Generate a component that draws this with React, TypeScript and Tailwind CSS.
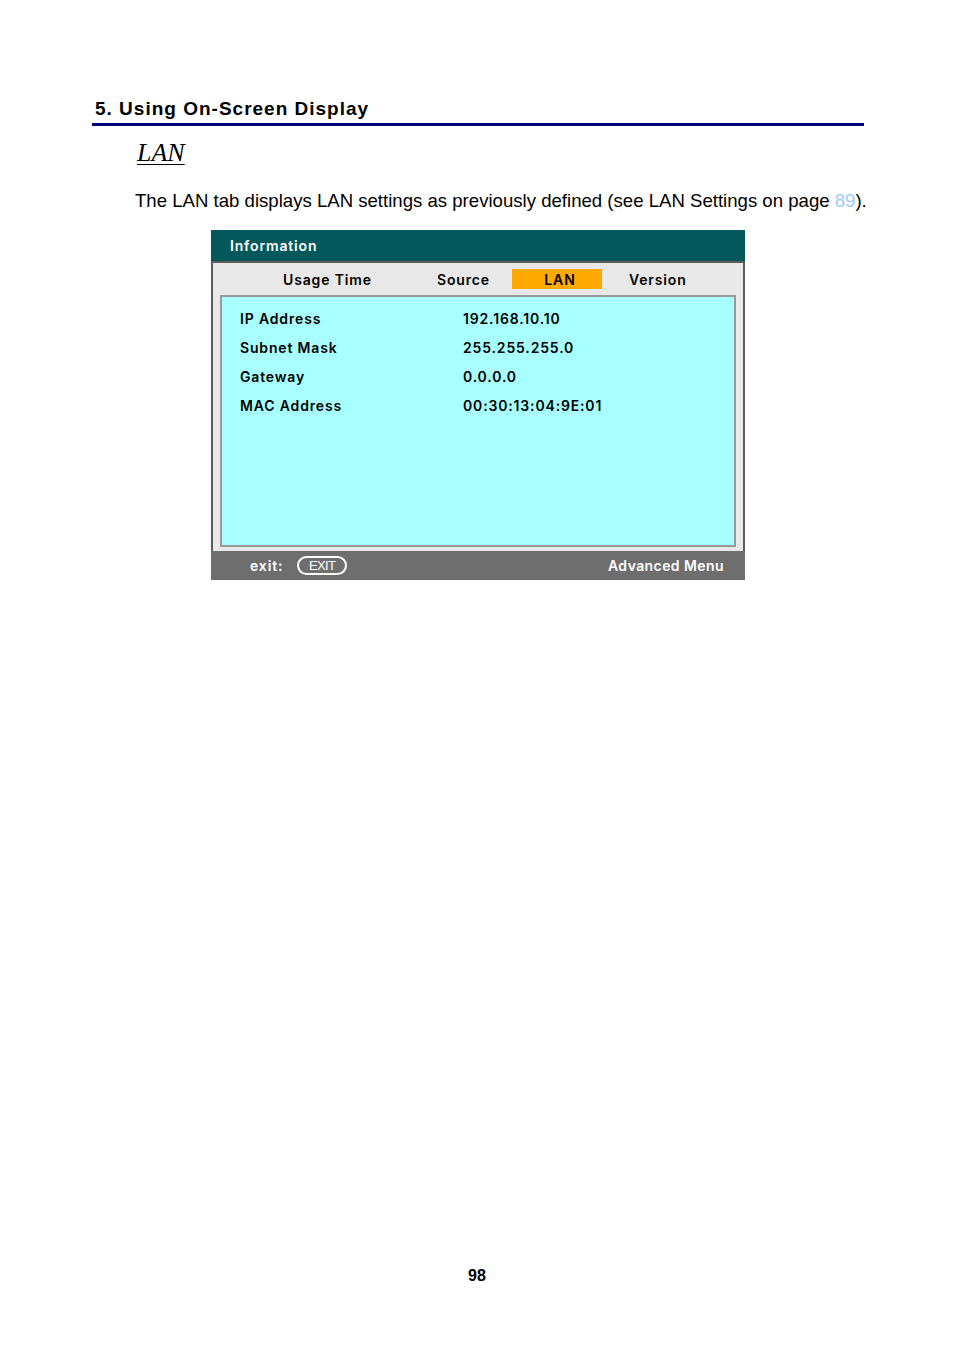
import React from 'react'

const osd = { fontFamily: 'Inter, "DejaVu Sans", sans-serif' }

const rows: [string, string][] = [
  ['IP Address', '192.168.10.10'],
  ['Subnet Mask', '255.255.255.0'],
  ['Gateway', '0.0.0.0'],
  ['MAC Address', '00:30:13:04:9E:01'],
]

function InfoPanel() {
  return (
    <div className="ml-[211px] w-[534px] text-[14px] font-semibold tracking-[0.06em] whitespace-nowrap" style={osd}>
      <div className="h-[31px] bg-[#02585a] text-white flex items-center pl-[19px]">Information</div>
      <div className="border-x-2 border-t-2 border-[#5c5c5c] bg-[#e8e8e8] pb-[4px]">
        <div className="h-[32px] flex items-center text-black">
          <div className="ml-[70px] w-[87px] text-center">Usage Time</div>
          <div className="ml-[67px] w-[51px] text-center">Source</div>
          <div className="ml-[24px] w-[90px] h-[20px] bg-[#ffaa00] flex items-center justify-center pl-[6px]">LAN</div>
          <div className="ml-[27px] w-[56px] text-center">Version</div>
        </div>
        <div className="mx-[7px] h-[252px] border-2 border-[#999999] bg-[#a8ffff] pt-[7px] pl-[18px] text-black">
          {rows.map(([label, value]) => (
            <div key={label} className="h-[29px] flex items-center">
              <span className="w-[223px]">{label}</span>
              <span>{value}</span>
            </div>
          ))}
        </div>
      </div>
      <div className="h-[29px] bg-[#6e6e6e] text-white flex items-center">
        <span className="ml-[39px]">exit:</span>
        <span className="ml-[14px] h-[19px] w-[50px] rounded-full border-2 border-white flex items-center justify-center text-[13px] font-normal tracking-tighter" style={{ fontFamily: '"Liberation Sans", sans-serif' }}>EXIT</span>
        <span className="ml-auto mr-[21px] tracking-[0.03em]">Advanced Menu</span>
      </div>
    </div>
  )
}

export default function App() {
  return (
    <div className="w-[954px] h-[1349px] bg-white flex flex-col" style={{ fontFamily: '"Liberation Sans", Arial, sans-serif' }}>
      <h2 className="mt-[97px] ml-[95px] text-[19px] font-bold tracking-[1px] leading-[24px] text-black">5. Using On-Screen Display</h2>
      <div className="mt-[2px] ml-[92px] w-[772px] h-[3px] bg-[#000080]" />
      <h3 className="mt-[12px] ml-[137px] text-[26px] italic underline underline-offset-[3px] decoration-1 leading-[30px] text-black" style={{ fontFamily: '"Liberation Serif", "Times New Roman", serif' }}>LAN</h3>
      <p className="mt-[22px] ml-[135px] text-[18.6px] leading-[22px] text-black whitespace-nowrap">
        The LAN tab displays LAN settings as previously defined (see LAN Settings on page <span className="text-[#99ccff]">89</span>).
      </p>
      <div className="mt-[18px]">
        <InfoPanel />
      </div>
      <div className="mt-auto mb-[61px] text-center text-[16px] font-bold text-black">98</div>
    </div>
  )
}
